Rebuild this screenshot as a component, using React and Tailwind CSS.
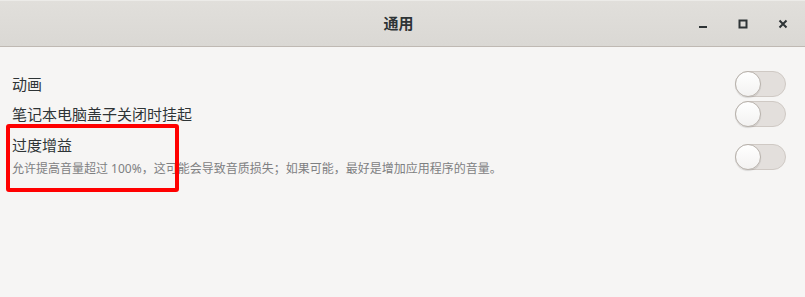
import React from "react";

function Toggle() {
  return (
    <div className="relative w-[51px] h-[26px] rounded-full bg-[#e3dfdc] border border-[#cfc9c4]">
      <div className="absolute left-[-1px] top-[-1px] w-[26px] h-[26px] rounded-full bg-gradient-to-b from-[#ffffff] to-[#f3f2f1] border border-[#b8b2ac] shadow-[0_1px_1px_rgba(0,0,0,0.12)]" />
    </div>
  );
}

export default function App() {
  const font = { fontFamily: '"Noto Sans", "Noto Sans CJK SC", sans-serif' };
  return (
    <div className="relative w-[805px] h-[297px] bg-[#f6f5f4] overflow-hidden" style={font}>
      <div className="relative h-[47px] bg-gradient-to-b from-[#e1dfdb] to-[#dad8d4] border-b border-[#bfb9b3] border-t border-t-[#ecebe8] flex items-center justify-center">
        <span className="text-[15px] font-bold text-[#2e3436] leading-none mt-[-1px] mr-[8px]">通用</span>
        <div className="absolute right-[2px] top-0 h-full flex items-center">
          <div className="w-[40px] h-full flex items-center justify-center">
            <svg width="10" height="10" viewBox="0 0 10 10"><rect x="1" y="7" width="8" height="2" fill="#2e3436" /></svg>
          </div>
          <div className="w-[40px] h-full flex items-center justify-center">
            <svg width="10" height="10" viewBox="0 0 10 10"><rect x="1.5" y="1.5" width="7" height="7" fill="none" stroke="#2e3436" strokeWidth="2" /></svg>
          </div>
          <div className="w-[40px] h-full flex items-center justify-center">
            <svg width="10" height="10" viewBox="0 0 10 10"><path d="M1.5 1.5 L8.5 8.5 M8.5 1.5 L1.5 8.5" stroke="#2e3436" strokeWidth="2" /></svg>
          </div>
        </div>
      </div>
      <div className="pt-[22px] pl-[12px] pr-[19px] text-[#2e3436]">
        <div className="h-[30px] flex items-center justify-between">
          <span className="text-[15px] leading-none">动画</span>
          <Toggle />
        </div>
        <div className="h-[30px] flex items-center justify-between">
          <span className="text-[15px] leading-none">笔记本电脑盖子关闭时挂起</span>
          <Toggle />
        </div>
        <div className="pt-[4px] flex items-center justify-between">
          <div className="flex flex-col">
            <div className="h-[24px] flex items-center text-[15px] leading-none">过度增益</div>
            <div className="h-[24px] flex items-center text-[12px] leading-none text-[#7e8082]">
              允许提高音量超过 100%，这可能会导致音质损失；如果可能，最好是增加应用程序的音量。
            </div>
          </div>
          <Toggle />
        </div>
      </div>
      <div className="absolute left-[6px] top-[124px] w-[173px] h-[68px] border-[4px] border-[#ff0000] rounded-[3px]" />
    </div>
  );
}
